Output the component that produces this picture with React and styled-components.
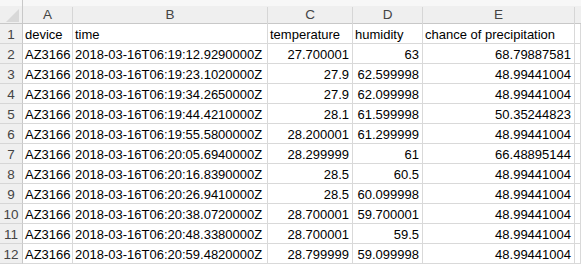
import styled, { createGlobalStyle } from 'styled-components';

const GlobalStyle = createGlobalStyle`
    html, body { margin: 0; padding: 0; background: #fff; }
    body { font-family: 'Liberation Sans', Arial, sans-serif; overflow: hidden; }
`;

const cols = '23px 50px 195px 85px 70px 152px 1fr';

const rows = [
    ['AZ3166', '2018-03-16T06:19:12.9290000Z', '27.700001', '63', '68.79887581'],
    ['AZ3166', '2018-03-16T06:19:23.1020000Z', '27.9', '62.599998', '48.99441004'],
    ['AZ3166', '2018-03-16T06:19:34.2650000Z', '27.9', '62.099998', '48.99441004'],
    ['AZ3166', '2018-03-16T06:19:44.4210000Z', '28.1', '61.599998', '50.35244823'],
    ['AZ3166', '2018-03-16T06:19:55.5800000Z', '28.200001', '61.299999', '48.99441004'],
    ['AZ3166', '2018-03-16T06:20:05.6940000Z', '28.299999', '61', '66.48895144'],
    ['AZ3166', '2018-03-16T06:20:16.8390000Z', '28.5', '60.5', '48.99441004'],
    ['AZ3166', '2018-03-16T06:20:26.9410000Z', '28.5', '60.099998', '48.99441004'],
    ['AZ3166', '2018-03-16T06:20:38.0720000Z', '28.700001', '59.700001', '48.99441004'],
    ['AZ3166', '2018-03-16T06:20:48.3380000Z', '28.700001', '59.5', '48.99441004'],
    ['AZ3166', '2018-03-16T06:20:59.4820000Z', '28.799999', '59.099998', '48.99441004'],
];

const Sheet = styled.div`
    width: 581px;
    height: 269px;
    overflow: hidden;
    font-size: 13px;
    color: #000;
`;

const HeaderRow = styled.div`
    display: grid;
    grid-template-columns: ${cols};
    height: 24px;
    background: linear-gradient(#f7f7f7 0 6px, #efefef 6px);
    border-bottom: 1px solid #c8c8c8;
    box-sizing: border-box;
`;

const ColHead = styled.div`
    display: flex;
    align-items: flex-end;
    justify-content: center;
    padding-bottom: 3px;
    color: #444;
    font-size: 13.5px;
    border-right: 1px solid ${(p) => (p.$last ? 'transparent' : '#d6d6d6')};
    margin-top: 7px;
`;

const Corner = styled.div`
    display: flex;
    align-items: flex-end;
    justify-content: flex-end;
    padding: 0 3px 3px 0;
    border-right: 1px solid #c8c8c8;
`;

const Row = styled.div`
    display: grid;
    grid-template-columns: ${cols};
    height: 20px;
`;

const RowHead = styled.div`
    background: #efefef;
    color: #444;
    font-size: 13.5px;
    display: flex;
    align-items: center;
    justify-content: center;
    padding-top: 2px;
    border-right: 1px solid #c8c8c8;
    border-bottom: 1px solid #d6d6d6;
`;

const Cell = styled.div`
    display: flex;
    align-items: center;
    justify-content: ${(p) => (p.$num ? 'flex-end' : 'flex-start')};
    padding: ${(p) => (p.$num ? '2px 3px 0 0' : '2px 0 0 2px')};
    white-space: nowrap;
    overflow: hidden;
    border-right: 1px solid #d9d9d9;
    border-bottom: 1px solid #d9d9d9;
`;

const isNum = (v) => /^[\d.]+$/.test(v);

function App() {
    return (
        <>
            <GlobalStyle />
            <Sheet>
                <HeaderRow>
                    <Corner>
                        <svg width='13' height='13' viewBox='0 0 13 13'>
                            <polygon points='13,0 13,13 0,13' fill='#d8d8d8' />
                        </svg>
                    </Corner>
                    {['A', 'B', 'C', 'D', 'E'].map((c) => (
                        <ColHead key={c}>{c}</ColHead>
                    ))}
                    <ColHead $last />
                </HeaderRow>
                <Row>
                    <RowHead>1</RowHead>
                    <Cell>device</Cell>
                    <Cell>time</Cell>
                    <Cell>temperature</Cell>
                    <Cell>humidity</Cell>
                    <Cell>chance of precipitation</Cell>
                    <Cell />
                </Row>
                {rows.map((r, i) => (
                    <Row key={i}>
                        <RowHead>{i + 2}</RowHead>
                        {r.map((v, j) => (
                            <Cell key={j} $num={isNum(v)}>
                                {v}
                            </Cell>
                        ))}
                        <Cell />
                    </Row>
                ))}
            </Sheet>
        </>
    );
}

export default App;
